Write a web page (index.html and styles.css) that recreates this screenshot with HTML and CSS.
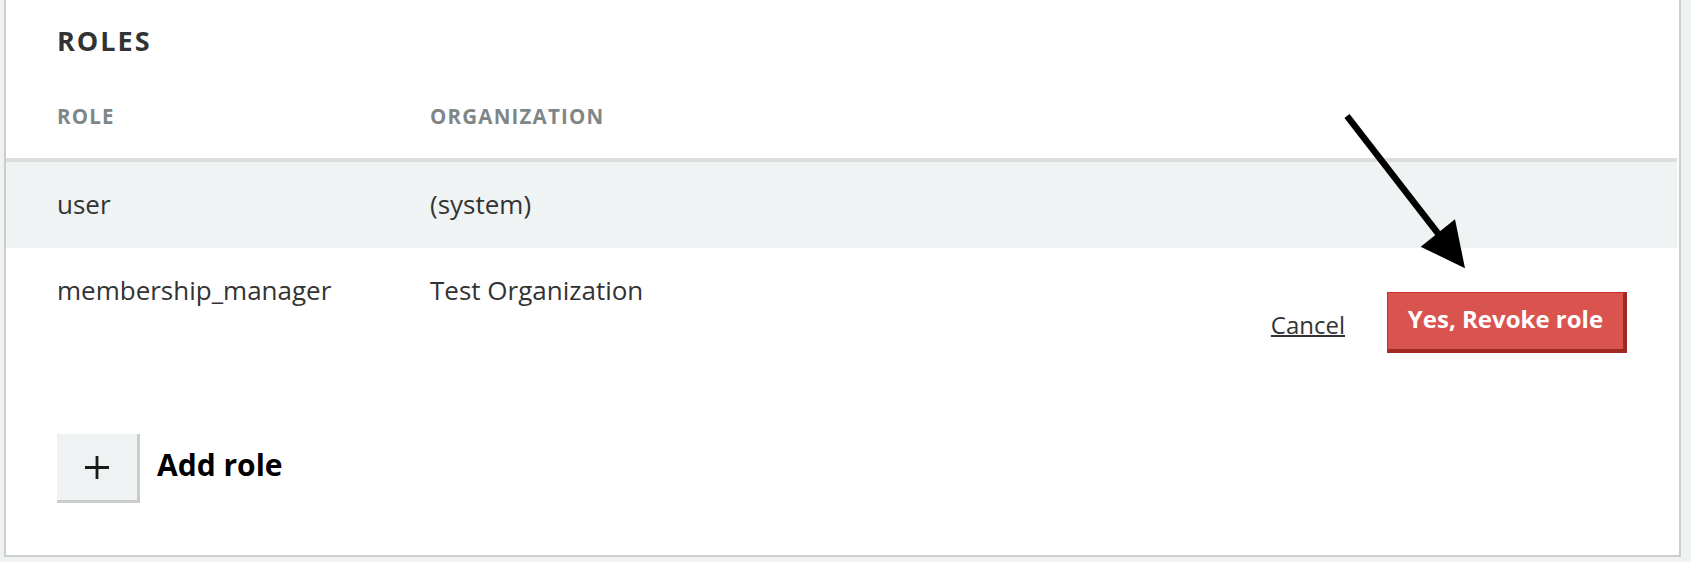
FILE: index.html
```html
<!DOCTYPE html>
<html lang="en">
<head>
<meta charset="utf-8">
<title>Roles</title>
<link rel="stylesheet" href="styles.css">
</head>
<body>
<div class="page">
  <section class="card">
    <h2 class="title">ROLES</h2>
    <div class="table">
      <div class="row head">
        <div class="cell">ROLE</div>
        <div class="cell">ORGANIZATION</div>
        <div class="cell"></div>
      </div>
      <div class="row shaded">
        <div class="cell">user</div>
        <div class="cell">(system)</div>
        <div class="cell"></div>
      </div>
      <div class="row confirm">
        <div class="cell">membership_manager</div>
        <div class="cell">Test Organization</div>
        <div class="cell actions">
          <a class="cancel" href="#">Cancel</a>
          <button class="revoke" type="button">Yes, Revoke role</button>
        </div>
      </div>
    </div>
    <div class="add">
      <button class="add-btn" type="button" aria-label="Add role">
        <svg width="24" height="23" viewBox="0 0 24 23"><path d="M12 0V23M0 11.5H24" stroke="#1a1a1a" stroke-width="2.8" fill="none"/></svg>
      </button>
      <span class="add-label">Add role</span>
    </div>
  </section>
  <svg class="arrow" width="1691" height="562" viewBox="0 0 1691 562">
    <line x1="1347" y1="116" x2="1440" y2="236" stroke="#000" stroke-width="6.5"/>
    <polygon points="1420.7,246.7 1455,219.3 1465,268.3" fill="#000"/>
  </svg>
</div>
</body>
</html>
```

FILE: styles.css
```css
html, body {
  margin: 0;
  padding: 0;
}
body {
  background: #eff2f3;
  font-family: "Open Sans", "Liberation Sans", sans-serif;
  color: #333;
  width: 1691px;
  height: 562px;
  overflow: hidden;
}
.page {
  position: relative;
  width: 1691px;
  height: 562px;
}
.card {
  margin-left: 4px;
  width: 1673px;
  background: #fff;
  border-left: 2px solid #cdcdcd;
  border-right: 2px solid #cdcdcd;
  border-bottom: 2px solid #cdcdcd;
  padding-top: 23px;
  padding-bottom: 52px;
}
.title {
  margin: 0;
  padding-left: 51px;
  font-size: 27px;
  line-height: 36px;
  font-weight: 700;
  letter-spacing: 2px;
  color: #333;
}
.table {
  margin-right: 2px;
}
.row {
  display: grid;
  grid-template-columns: 373px 1fr auto;
  padding: 24px 50px 26px 51px;
  font-size: 26px;
  line-height: 36px;
  color: #333;
}
.row.head {
  padding-top: 45px;
  padding-bottom: 30px;
  border-bottom: 4px solid #dcdddd;
  font-size: 20.5px;
  line-height: 24px;
  font-weight: 700;
  letter-spacing: 1.2px;
  color: #7e8687;
}
.row.shaded {
  background: #eff3f4;
}
.row.confirm {
  padding-bottom: 24px;
}
.actions {
  display: flex;
  align-items: center;
  margin-top: 20px;
}
.cancel {
  font-size: 24px;
  line-height: 33px;
  color: #333;
  text-decoration: underline;
  text-decoration-thickness: 2px;
  margin-right: 42px;
  margin-top: 3px;
}
.revoke {
  box-sizing: border-box;
  height: 61px;
  width: 240px;
  padding: 0 0 4px 0;
  margin: 0;
  background: #d9534f;
  color: #fff;
  font-family: "Open Sans", "Liberation Sans", sans-serif;
  font-size: 24px;
  line-height: 52px;
  font-weight: 700;
  border-top: 1px solid #c9302c;
  border-left: 1px solid #c9302c;
  border-right: 4px solid #a02924;
  border-bottom: 4px solid #a02924;
  border-radius: 0;
}
.add {
  display: flex;
  align-items: center;
  margin-top: 57px;
  padding-left: 51px;
}
.add-btn {
  box-sizing: border-box;
  width: 83px;
  height: 69px;
  margin: 0;
  padding: 0;
  display: flex;
  align-items: center;
  justify-content: center;
  background: #eff2f3;
  border: 0;
  border-right: 3px solid #cccccc;
  border-bottom: 3px solid #cccccc;
  border-radius: 0;
}
.add-label {
  margin-left: 17px;
  margin-bottom: 8px;
  font-size: 30px;
  line-height: 40px;
  font-weight: 700;
  color: #000;
}
.arrow {
  position: absolute;
  left: 0;
  top: 0;
  pointer-events: none;
}
```
